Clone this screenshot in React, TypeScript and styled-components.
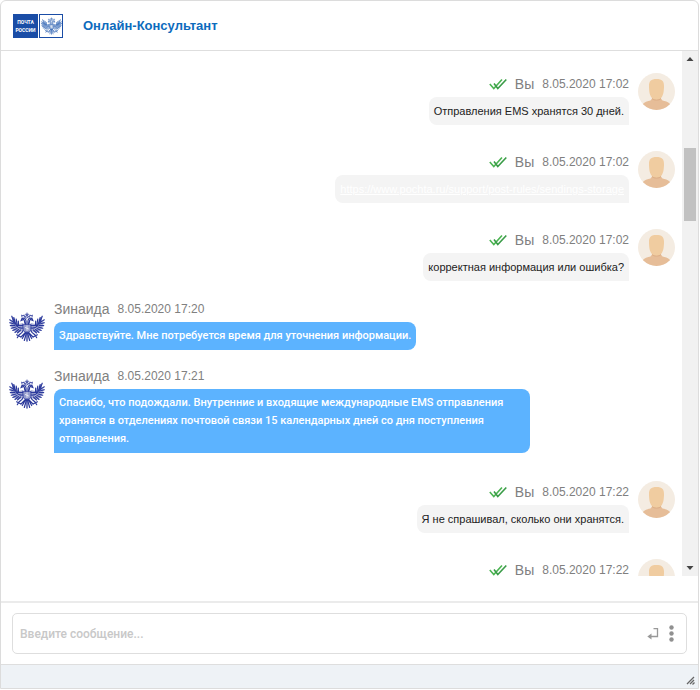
import React from "react";
import styled, { createGlobalStyle } from "styled-components";

const GlobalStyle = createGlobalStyle`
  *, *::before, *::after { box-sizing: border-box; }
  body { margin: 0; background: #fff; font-family: "Liberation Sans", Arial, sans-serif; }
`;

const Frame = styled.main`
  display: flex;
  flex-direction: column;
  height: calc(100vh - 1px);
  margin-right: 1px;
  border: 1px solid #dcdcdc;
  border-radius: 6px 6px 0 0;
  background: #fff;
  overflow: hidden;
`;

const Header = styled.header`
  flex: none;
  display: flex;
  align-items: center;
  gap: 20px;
  height: 50px;
  padding: 0 12px;
  border-bottom: 1px solid #dedede;
`;

const Title = styled.h1`
  margin: 0;
  font-size: 13px;
  line-height: 16px;
  font-weight: 700;
  color: #0d6bbd;
`;

const Logo = styled.div`
  display: flex;
  gap: 1px;
  height: 24px;
`;

const LogoName = styled.div`
  display: flex;
  flex-direction: column;
  align-items: center;
  justify-content: center;
  width: 25px;
  background: #1a4da6;
  color: #fff;
  font-family: Roboto, sans-serif;
  font-size: 5px;
  line-height: 8px;
  font-weight: 700;
`;

const LogoMark = styled.div`
  display: flex;
  align-items: center;
  justify-content: center;
  width: 24px;
  border: 1px solid #1a4da6;
`;

const Conversation = styled.section`
  flex: 1;
  display: flex;
  min-height: 0;
  margin-bottom: 25px;
`;

const Messages = styled.div`
  flex: 1;
  min-width: 0;
  padding: 22px 7px 0 8px;
  overflow: hidden;
`;

const Group = styled.div<{ $mine?: boolean }>`
  display: flex;
  flex-direction: column;
  gap: ${(p) => (p.$mine ? 26 : 15)}px;
  margin: ${(p) => (p.$mine ? "0" : "17px 0 28px")};
`;

const Message = styled.article<{ $mine?: boolean }>`
  display: flex;
  flex-direction: ${(p) => (p.$mine ? "row-reverse" : "row")};
  align-items: flex-start;
  gap: 9px;
`;

const Content = styled.div<{ $mine?: boolean }>`
  display: flex;
  flex-direction: column;
  align-items: ${(p) => (p.$mine ? "flex-end" : "flex-start")};
  gap: 2px;
  max-width: 476px;
`;

const Meta = styled.div`
  display: flex;
  align-items: center;
  gap: 8px;
  height: 22px;
  color: #808080;
  font-size: 12px;
  line-height: 22px;
`;

const Author = styled.span`
  font-size: 14px;
`;

const Bubble = styled.p<{ $mine?: boolean }>`
  margin: 0;
  padding: 5px;
  border-radius: ${(p) => (p.$mine ? "8px 8px 0 8px" : "8px 8px 8px 0")};
  background: ${(p) => (p.$mine ? "#f4f4f4" : "#5cb3ff")};
  color: ${(p) => (p.$mine ? "#222" : "#fff")};
  font-family: ${(p) => (p.$mine ? '"Liberation Sans", Arial' : "Roboto")}, sans-serif;
  font-size: 11px;
  line-height: 18px;
  font-weight: ${(p) => (p.$mine ? 400 : 500)};
`;

const BubbleLink = styled.a`
  color: #fff;
`;

const EagleSlot = styled.div`
  flex: none;
  height: 30px;
  margin-top: 14px;
`;

const Drawing = styled.svg`
  display: block;
  flex: none;
`;

const Scrollbar = styled.div`
  flex: none;
  display: flex;
  flex-direction: column;
  align-items: center;
  justify-content: space-between;
  width: 16px;
  padding: 5px 0;
  background: #f1f1f1;
`;

const ScrollTrack = styled.div`
  flex: 1;
  display: grid;
  grid-template-rows: 80fr 74fr 343fr;
  width: 12px;
  padding: 8px 0;
`;

const ScrollThumb = styled.div`
  grid-row: 2;
  background: #c1c1c1;
`;

const Composer = styled.form`
  flex: none;
  padding: 10px 11px;
  border-top: 2px solid #ebebeb;
`;

const Field = styled.div`
  display: flex;
  align-items: center;
  height: 41px;
  padding: 0 7px;
  border: 1px solid #dedede;
  border-radius: 5px;
`;

const TextInput = styled.input`
  flex: 1;
  min-width: 0;
  padding: 0;
  border: 0;
  outline: 0;
  background: transparent;
  color: #333;
  font: 500 12px/20px Roboto, sans-serif;
  &::placeholder { color: #c8c8c8; opacity: 1; }
`;

const IconButton = styled.button`
  display: flex;
  align-items: center;
  justify-content: center;
  height: 24px;
  padding: 0 5px;
  border: 0;
  background: transparent;
`;

const Footer = styled.footer`
  flex: none;
  display: flex;
  align-items: flex-end;
  justify-content: flex-end;
  height: 24px;
  padding: 3px;
  border-top: 1px solid #dedede;
  background: #eef2f6;
`;

function EagleHalf({ color }: { color: string }) {
  return (
    <g>
      <path
        d="M3 5.500C4 9 7 11.500 10 12L14 11V19L11 20 8 21 7 19.500 4.500 19 4.500 17.500 2.500 16.500 3 15 1.200 13.500 2 12 .5 10 3 9.500Z"
        fill={color}
        fillOpacity=".4"
        stroke="none"
      />
      <path d="M5 10 2.800 4.200M6.500 11.500 4.800 5.500M8 12.500 7.200 7M9.500 13 9.300 9" strokeWidth="1.200" />
      <path d="M5 10.500.7 7.800M5.500 12 .6 10.800M6 13.500 1.300 13.600M7 15 2.200 16.200M8 16.500 3.800 18.500M9.500 17.500 6 20.500M11.500 18 8.500 21" strokeWidth="1.150" />
      <path d="M5 10.500C7 14 10 14 14 13.500M7 13C9 16 11 16.500 14 16" strokeWidth="1.100" />
      <path d="M16.500 12C14.800 10.500 16.200 8.500 14.800 7.500L12.200 8.500 13 6.600 15 6C17 6.500 17.300 9 17 12" strokeWidth="1.200" />
      <path d="M13 5.200 12.600 3 14.200 4 15 2.800 15.800 5.300" strokeWidth=".8" />
      <path d="M14 18.500C13.500 21 11.500 21.500 9.800 23.200M7.600 22.800 11.500 24.800M9.800 23.200 8.300 25.700" strokeWidth="1.200" />
      <path d="M17 20 13.300 26.500M17.500 21 15.300 28.500M16 21 12 25" strokeWidth="1.200" />
    </g>
  );
}

function Eagle({ width, height, color = "#2c3a9c" }: { width: number; height: number; color?: string }) {
  return (
    <Drawing width={width} height={height} viewBox="0 0 36 30" fill="none" stroke={color} strokeLinecap="round" aria-hidden="true">
      <EagleHalf color={color} />
      <g transform="translate(36 0) scale(-1 1)">
        <EagleHalf color={color} />
      </g>
      <path d="M18 5V1M16.500 2.300H19.500M16.200 4.500 18 3.300 19.800 4.500 18 6Z" strokeWidth=".8" />
      <path d="M14 12.300H22V17C22 19.300 20 20.500 18 21.500 16 20.500 14 19.300 14 17Z" fill={color} fillOpacity=".5" strokeWidth=".8" />
      <path d="M18 13.800V18.500M16.300 15.500 19.700 17" stroke="#fff" strokeWidth=".7" />
      <path d="M18 21V29" strokeWidth="1.300" />
    </Drawing>
  );
}

function Person() {
  return (
    <Drawing width="37" height="37" viewBox="0 0 37 37" aria-hidden="true">
      <clipPath id="disc"><circle cx="18.500" cy="18.500" r="18.500" /></clipPath>
      <g clipPath="url(#disc)">
        <path d="M0 0H37V37H0Z" fill="#f4ece2" />
        <path d="M3 37C3 30.500 7 28.500 12.500 27.500L14.500 25H22.500L24.500 27.500C30 28.500 34 30.500 34 37Z" fill="#e6bd98" />
        <path d="M11 14C10.700 8 13 6 18.500 6S26.300 8 26 14C25.800 19 25.500 21.500 23.500 24.500 21.500 27.500 15.500 27.500 13.500 24.500 11.500 21.500 11.200 19 11 14Z" fill="#f0cca0" />
        <path d="M14 25C16 27.300 21 27.300 23 25V26C21 28 16 28 14 26Z" fill="#dcae86" />
      </g>
    </Drawing>
  );
}

function DoubleCheck() {
  return (
    <Drawing width="18" height="13" viewBox="0 0 18 13" fill="none" role="img" aria-label="Прочитано">
      <path d="M.8 6 4.800 10.500 13 1.500" stroke="#4cb552" strokeWidth="1.600" />
      <path d="M5 5.500 8.800 10.500 17.300 1.500" stroke="#3a9c48" strokeWidth="1.600" />
    </Drawing>
  );
}

function Mine({ time, children }: { time: string; children?: React.ReactNode }) {
  return (
    <Message $mine>
      <Person />
      <Content $mine>
        <Meta><DoubleCheck /><Author>Вы</Author><time>{time}</time></Meta>
        {children && <Bubble $mine>{children}</Bubble>}
      </Content>
    </Message>
  );
}

function Agent({ time, children }: { time: string; children: React.ReactNode }) {
  return (
    <Message>
      <EagleSlot><Eagle width={36} height={30} /></EagleSlot>
      <Content>
        <Meta><Author>Зинаида</Author><time>{time}</time></Meta>
        <Bubble>{children}</Bubble>
      </Content>
    </Message>
  );
}

export default function App() {
  return (
    <>
      <GlobalStyle />
      <Frame>
        <Header>
          <Logo>
            <LogoName><span>ПОЧТА</span><span>РОССИИ</span></LogoName>
            <LogoMark><Eagle width={21} height={18} color="#3f6fb8" /></LogoMark>
          </Logo>
          <Title>Онлайн-Консультант</Title>
        </Header>
        <Conversation>
          <Messages>
            <Group $mine>
              <Mine time="8.05.2020 17:02">Отправления EMS хранятся 30 дней.</Mine>
              <Mine time="8.05.2020 17:02">
                <BubbleLink href="https://www.pochta.ru/support/post-rules/sendings-storage">
                  https://www.pochta.ru/support/post-rules/sendings-storage
                </BubbleLink>
              </Mine>
              <Mine time="8.05.2020 17:02">корректная информация или ошибка?</Mine>
            </Group>
            <Group>
              <Agent time="8.05.2020 17:20">Здравствуйте. Мне потребуется время для уточнения информации.</Agent>
              <Agent time="8.05.2020 17:21">
                Спасибо, что подождали. Внутренние и входящие международные EMS отправления хранятся в отделениях
                почтовой связи 15 календарных дней со дня поступления отправления.
              </Agent>
            </Group>
            <Group $mine>
              <Mine time="8.05.2020 17:22">Я не спрашивал, сколько они хранятся.</Mine>
              <Mine time="8.05.2020 17:22" />
            </Group>
          </Messages>
          <Scrollbar aria-hidden="true">
            <Drawing width="8" height="5" viewBox="0 0 8 5"><path d="M0.500 5 4 1 7.500 5Z" fill="#444" /></Drawing>
            <ScrollTrack><ScrollThumb /></ScrollTrack>
            <Drawing width="8" height="5" viewBox="0 0 8 5"><path d="M0.500 0 4 4 7.500 0Z" fill="#444" /></Drawing>
          </Scrollbar>
        </Conversation>
        <Composer onSubmit={(e) => e.preventDefault()}>
          <Field>
            <TextInput aria-label="Сообщение" placeholder="Введите сообщение..." />
            <IconButton type="submit" aria-label="Отправить">
              <Drawing width="12" height="12" viewBox="0 0 12 12" fill="none" stroke="#999">
                <path d="M6.500 .5H10.500V8.500H2" strokeWidth="1.300" />
                <path d="M4.500 5.500 .3 8.500 4.500 11.500Z" fill="#999" stroke="none" />
              </Drawing>
            </IconButton>
            <IconButton type="button" aria-label="Меню">
              <Drawing width="5" height="17" viewBox="0 0 5 17" fill="#909090">
                <circle cx="2.500" cy="2.500" r="2.200" /><circle cx="2.500" cy="8.500" r="2.200" /><circle cx="2.500" cy="14.500" r="2.200" />
              </Drawing>
            </IconButton>
          </Field>
        </Composer>
        <Footer>
          <Drawing width="9" height="9" viewBox="0 0 9 9" stroke="#666" strokeWidth="1.300" aria-hidden="true">
            <path d="M1 8 8 1M4 8 8 4M6.500 8.500 8.500 6.500" />
          </Drawing>
        </Footer>
      </Frame>
    </>
  );
}
